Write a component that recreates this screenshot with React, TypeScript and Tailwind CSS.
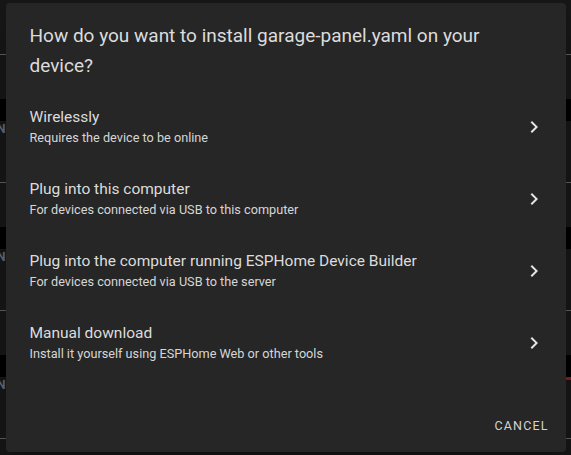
import React from "react";

const options = [
  { title: "Wirelessly", subtitle: "Requires the device to be online" },
  { title: "Plug into this computer", subtitle: "For devices connected via USB to this computer" },
  {
    title: "Plug into the computer running ESPHome Device Builder",
    subtitle: "For devices connected via USB to the server",
  },
  { title: "Manual download", subtitle: "Install it yourself using ESPHome Web or other tools" },
];

function Chevron() {
  return (
    <svg viewBox="0 0 24 24" className="-mt-[2px] h-6 w-6 shrink-0 fill-[#e4e4e4]">
      <path d="M8.59 16.59 13.17 12 8.59 7.41 10 6l6 6-6 6-1.41-1.41z" />
    </svg>
  );
}

function BackdropBlock({ red }: { red?: boolean }) {
  return (
    <div className="flex flex-col">
      <div className="h-px bg-[#5c5c5c]" />
      <div className="h-[44px]" />
      <div className="h-[22px] bg-black" />
      <div className="relative h-[61px]">
        <span className="absolute -left-[3px] top-[2px] text-[12px] font-bold leading-none text-[#5b6b82]">N</span>
        {red && <div className="absolute right-0 top-0 h-[3px] w-[8px] bg-[#8a1c1c]" />}
      </div>
    </div>
  );
}

export default function App() {
  return (
    <div
      className="relative h-[455px] w-[571px] overflow-hidden bg-[#171717]"
      style={{ fontFamily: "Roboto, 'Noto Sans', sans-serif" }}
    >
      {/* dimmed page behind the dialog */}
      <div className="flex flex-col pt-[54px]">
        <BackdropBlock />
        <BackdropBlock />
        <BackdropBlock red />
        <BackdropBlock />
      </div>

      <div className="absolute inset-0 flex items-center justify-center">
        <div className="flex h-[449px] w-[560px] flex-col rounded-[4px] bg-[#262626] shadow-[0_11px_15px_-7px_rgba(0,0,0,0.2),0_24px_38px_3px_rgba(0,0,0,0.14)]">
          <h2 className="px-6 pt-[18px] text-[19px] leading-[30px] text-[#dcdcdc]">
            How do you want to install garage-panel.yaml on your device?
          </h2>

          <ul className="mt-[10px] flex flex-col">
            {options.map((o) => (
              <li key={o.title} className="flex h-[72px] items-center justify-between pl-6 pr-5 pt-[2px]">
                <div className="flex flex-col">
                  <span className="text-[15.5px] leading-5 text-[#dcdcdc]">{o.title}</span>
                  <span className="text-[12.7px] leading-[22px] text-[#d6d6d6]">{o.subtitle}</span>
                </div>
                <Chevron />
              </li>
            ))}
          </ul>

          <div className="mt-auto flex justify-end pb-2 pr-[9px]">
            <button className="h-9 px-2 text-[12.5px] font-normal tracking-[0.09em] text-[#d4d4d4]">CANCEL</button>
          </div>
        </div>
      </div>
    </div>
  );
}
